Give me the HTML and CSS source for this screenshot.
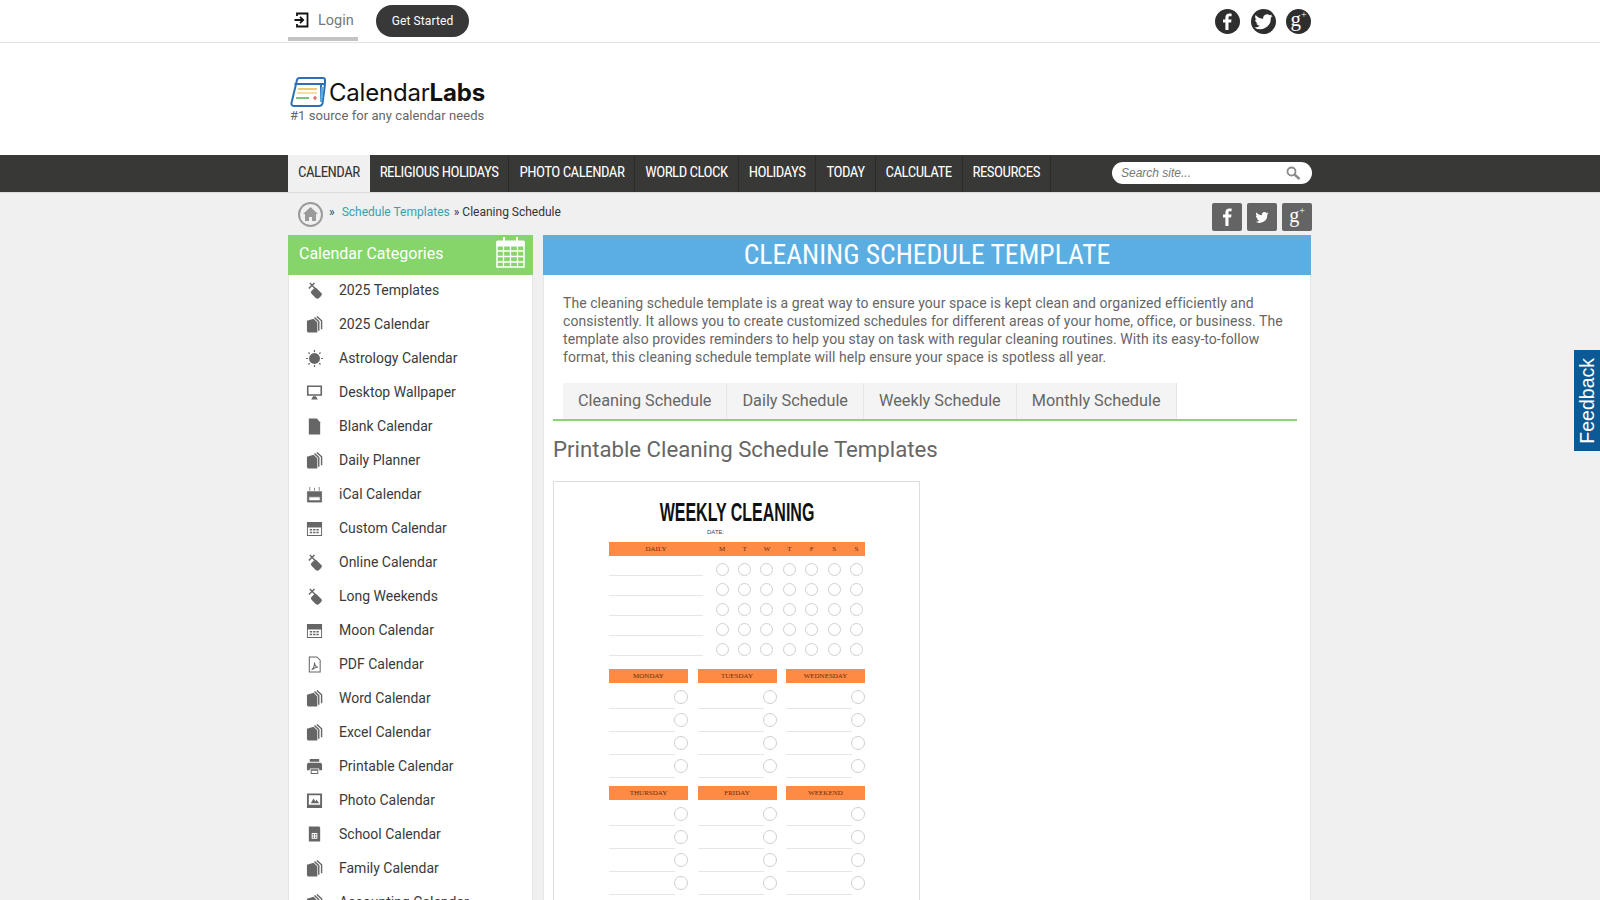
FILE: index.html
```html
<!DOCTYPE html>
<html lang="en">
  <head>
    <meta charset="UTF-8" />
    <title>Cleaning Schedule Template</title>
    <link rel="stylesheet" href="styles.css">
  </head>
  <body>
    <svg class="sprites" width="0" height="0">
      <symbol id="i-pair" viewBox="0 0 18 18"><rect x="7" y="6.500" width="8" height="11" rx="2.500" transform="rotate(-45 11 12)"/><path d="M4 1l5.500 5.500M9 1L3 7" fill="none" stroke="#666" stroke-width="1.500"/></symbol>
      <symbol id="i-docs" viewBox="0 0 18 18"><path d="M1 5L8 3l4 4v10.500H3c-1.200 0-2-.8-2-2z"/><path d="M9 1.500l4.500 4.500v9.500M11.500 .5l5 4.500v9" fill="none" stroke="#666" stroke-width="1.500"/></symbol>
      <symbol id="i-sun" viewBox="0 0 18 18"><circle cx="9" cy="9" r="5.800"/><path d="M9 0v2M9 16v2M0 9h2M16 9h2M2.600 2.600L4 4M14 14l1.400 1.400M2.600 15.400L4 14M14 4l1.400-1.400" stroke="#666" stroke-width="1.300"/></symbol>
      <symbol id="i-screen" viewBox="0 0 18 18"><path d="M1 1.500h16v11H1zm1.700 1.700v7.600h12.600V3.200zM5.500 16.500l2-3.500h3l2 3.500z" fill-rule="evenodd"/></symbol>
      <symbol id="i-page" viewBox="0 0 18 18"><path d="M3 .5h8.500l3.500 4V17.500H3z"/></symbol>
      <symbol id="i-ical" viewBox="0 0 18 18"><path d="M1.500 6h15v11h-15zm1.500 5.500v4h12v-4zM4 1v4M9 2v3M14 1v4" fill-rule="evenodd" stroke="#666" stroke-width=".8"/></symbol>
      <symbol id="i-cal" viewBox="0 0 18 18"><path d="M1 2h16v15H1zm1 6v8h14V8zM4 9.500h2.500V11H4zm3.500 0H10V11H7.500zm3.500 0h2.500V11H11zM4 12.500h2.500V14H4zm3.500 0H10V14H7.500zm3.500 0h2.500V14H11z" fill-rule="evenodd"/></symbol>
      <symbol id="i-pdf" viewBox="0 0 18 18"><path d="M3.500 1h8l3.500 3.500v12.500h-11.500zM6 14.500c2-1 3-4.500 3-7.500 0 3 1.500 4.500 3.500 5-2 0-4 1-6.500 2.500" fill="none" stroke="#666" stroke-width="1.100"/></symbol>
      <symbol id="i-print" viewBox="0 0 18 18"><path d="M4 1h10v3H4zM3 5h12c1 0 2 1 2 2v6h-3v-2H4v2H1V7c0-1 1-2 2-2zM5 12h8v5H5zm1 1.500V16h6v-2.500z" fill-rule="evenodd"/></symbol>
      <symbol id="i-photo" viewBox="0 0 18 18"><path d="M1 1.500h16v15.500H1zm2 2v10h12v-10zM5 12l3-5 2 3 1-2 3 4z" fill-rule="evenodd"/></symbol>
      <symbol id="i-school" viewBox="0 0 18 18"><path d="M3 .5h11l1 1v15H3zm3 7v6h6v-6zm1 1h1.500V10H7zm2.500 0H11V10H9.500zM7 11h1.500v1.500H7zm2.500 0H11v1.500H9.500z" fill-rule="evenodd"/></symbol>
    </svg>

    <div class="topbar">
      <div class="wrap topbar-in">
        <a class="login">
          <svg width="18" height="18" viewBox="0 0 18 18" fill="none" stroke="#111" stroke-width="1.800"><path d="M4 5V2.500h10.500v13H4V13M1.500 9h8M7 5.800L10.200 9 7 12.200"/></svg>
          Login
        </a>
        <a class="get-started">Get Started</a>
        <div class="social">
          <span class="circle"><svg width="25" height="25" viewBox="0 0 25 25"><path fill="#fff" d="M13.500 21v-7.500h2.600l.4-3h-3V8.700c0-.9.300-1.400 1.500-1.400h1.600V4.600c-.3 0-1.200-.1-2.300-.1-2.300 0-3.900 1.400-3.900 4v2H8v3h2.400V21z"/></svg></span>
          <span class="circle"><svg width="25" height="25" viewBox="1.500 1.500 22 22"><path fill="#fff" d="M20.500 7.600c-.6.300-1.200.4-1.900.5.700-.4 1.200-1 1.400-1.800-.6.400-1.300.7-2.100.8a3.300 3.300 0 0 0-5.600 3c-2.700-.1-5.100-1.400-6.700-3.400-.9 1.500-.4 3.400 1 4.400-.5 0-1-.2-1.500-.4 0 1.600 1.100 3 2.600 3.300-.5.100-1 .1-1.500 0 .4 1.300 1.600 2.200 3.100 2.300A6.700 6.700 0 0 1 4.400 17.700a9.400 9.400 0 0 0 14.500-8.400c.6-.4 1.200-1 1.600-1.700z"/></svg></span>
          <span class="circle gplus">g<sup>+</sup></span>
        </div>
      </div>
    </div>

    <div class="brand">
      <div class="wrap">
        <div class="logo">
          <svg width="36" height="30" viewBox="0 0 36 30" fill="none">
            <path d="M6 7l1-4c.3-1.200 1-2 2.500-2H33c1 0 2 .8 2 2v4" stroke="#2f6fb3" stroke-width="2"/>
            <path d="M6 7h29M4.500 7h25c1 0 1.500.8 1.500 2v15" stroke="#2f6fb3" stroke-width="2"/>
            <path d="M6 7L1.500 26c-.3 1.500.5 3 2 3H29c1.500 0 3-1 3.500-2.500L35 7" stroke="#2f6fb3" stroke-width="2"/>
            <path d="M31 10h3l-2 15h-2z" fill="#5baee2"/>
            <path d="M8 12h19" stroke="#e9b949" stroke-width="1.500"/>
            <path d="M7 16h20" stroke="#f0d68a" stroke-width="1.500"/>
            <path d="M6 21h13" stroke="#4caf50" stroke-width="1.500"/>
            <path d="M23 21h4M25 19v4" stroke="#d9534f" stroke-width="1.200"/>
          </svg>
          <span class="logo-text">Calendar<b>Labs</b></span>
        </div>
        <div class="tagline">#1 source for any calendar needs</div>
      </div>
    </div>

    <div class="navbar">
      <div class="wrap nav-in">
        <ul class="nav">
          <li class="active">CALENDAR</li>
          <li>RELIGIOUS HOLIDAYS</li>
          <li>PHOTO CALENDAR</li>
          <li>WORLD CLOCK</li>
          <li>HOLIDAYS</li>
          <li>TODAY</li>
          <li>CALCULATE</li>
          <li>RESOURCES</li>
        </ul>
        <div class="search">
          <span>Search site...</span>
          <svg width="16" height="16" viewBox="0 0 16 16" fill="none" stroke="#8a8a8a"><circle cx="6.500" cy="6.500" r="4" stroke-width="1.800"/><path d="M9.500 9.500l5 4.500" stroke-width="2.400"/></svg>
        </div>
      </div>
    </div>

    <div class="wrap crumbs-row">
      <div class="crumbs">
        <span class="home"><svg width="17" height="17" viewBox="0 0 17 17"><path fill="#9a9a9a" d="M8.500 1L1 8h2v7h4v-4h3v4h4V8h2z"/></svg></span>
        <span class="sep">»</span>
        <a class="crumb-link">Schedule Templates</a>
        <span class="crumb-rest">» Cleaning Schedule</span>
      </div>
      <div class="share">
        <span class="square"><svg width="30" height="28" viewBox="0 0 30 28"><path fill="#fff" d="M16.500 23v-8.500h2.600l.4-3h-3V9.700c0-.9.300-1.400 1.500-1.400h1.600V5.600c-.3 0-1.200-.1-2.300-.1-2.300 0-3.900 1.400-3.900 4v2h-2.400v3h2.400V23z"/></svg></span>
        <span class="square"><svg width="30" height="28" viewBox="-3 -3 36 34"><path fill="#fff" d="M23 9.500c-.6.300-1.200.4-1.900.5.700-.4 1.200-1 1.400-1.800-.6.400-1.300.7-2.100.8a3.300 3.300 0 0 0-5.600 3c-2.700-.1-5.100-1.400-6.700-3.400-.9 1.500-.4 3.400 1 4.400-.5 0-1-.2-1.500-.4 0 1.600 1.100 3 2.600 3.300-.5.100-1 .1-1.500 0 .4 1.300 1.600 2.200 3.100 2.300a6.700 6.700 0 0 1-4.900 1.400 9.400 9.400 0 0 0 14.500-8.400c.6-.4 1.200-1 1.600-1.700z"/></svg></span>
        <span class="square gplus">g<sup>+</sup></span>
      </div>
    </div>

    <div class="wrap columns">
      <aside class="sidebar">
        <div class="side-head">
          <span>Calendar Categories</span>
          <svg width="29" height="32" viewBox="0 0 29 32" fill="none" stroke="#fff"><path d="M1 6h27v25H1z" stroke-width="1.500"/><path d="M1 5h27v5H1z" fill="#fff"/><path d="M8 1v6M21 1v6" stroke-width="2"/><path d="M1 15h27M1 20.500h27M1 26h27M7.500 10v21M14.500 10v21M21.500 10v21" stroke-width="1.300"/></svg>
        </div>
        <ul class="cats">
          <li><svg><use href="#i-pair"/></svg>2025 Templates</li>
          <li><svg><use href="#i-docs"/></svg>2025 Calendar</li>
          <li><svg><use href="#i-sun"/></svg>Astrology Calendar</li>
          <li><svg><use href="#i-screen"/></svg>Desktop Wallpaper</li>
          <li><svg><use href="#i-page"/></svg>Blank Calendar</li>
          <li><svg><use href="#i-docs"/></svg>Daily Planner</li>
          <li><svg><use href="#i-ical"/></svg>iCal Calendar</li>
          <li><svg><use href="#i-cal"/></svg>Custom Calendar</li>
          <li><svg><use href="#i-pair"/></svg>Online Calendar</li>
          <li><svg><use href="#i-pair"/></svg>Long Weekends</li>
          <li><svg><use href="#i-cal"/></svg>Moon Calendar</li>
          <li><svg><use href="#i-pdf"/></svg>PDF Calendar</li>
          <li><svg><use href="#i-docs"/></svg>Word Calendar</li>
          <li><svg><use href="#i-docs"/></svg>Excel Calendar</li>
          <li><svg><use href="#i-print"/></svg>Printable Calendar</li>
          <li><svg><use href="#i-photo"/></svg>Photo Calendar</li>
          <li><svg><use href="#i-school"/></svg>School Calendar</li>
          <li><svg><use href="#i-docs"/></svg>Family Calendar</li>
          <li><svg><use href="#i-docs"/></svg>Accounting Calendar</li>
        </ul>
      </aside>

      <main class="content">
        <h1>CLEANING SCHEDULE TEMPLATE</h1>
        <div class="body">
          <p class="intro">The cleaning schedule template is a great way to ensure your space is kept clean and organized efficiently and consistently. It allows you to create customized schedules for different areas of your home, office, or business. The template also provides reminders to help you stay on task with regular cleaning routines. With its easy-to-follow format, this cleaning schedule template will help ensure your space is spotless all year.</p>
          <div class="tabs">
            <a>Cleaning Schedule</a>
            <a>Daily Schedule</a>
            <a>Weekly Schedule</a>
            <a>Monthly Schedule</a>
          </div>
          <h2>Printable Cleaning Schedule Templates</h2>
          <div class="thumb">
            <div class="sheet">
              <div class="sheet-title">WEEKLY CLEANING</div>
              <div class="sheet-date">DATE:</div>
              <div class="daily-head">
                <span class="daily-label">DAILY</span>
                <span class="days"><i>M</i><i>T</i><i>W</i><i>T</i><i>F</i><i>S</i><i>S</i></span>
              </div>
              <div class="daily-row"><span class="rule"></span><span class="days"><i></i><i></i><i></i><i></i><i></i><i></i><i></i></span></div>
              <div class="daily-row"><span class="rule"></span><span class="days"><i></i><i></i><i></i><i></i><i></i><i></i><i></i></span></div>
              <div class="daily-row"><span class="rule"></span><span class="days"><i></i><i></i><i></i><i></i><i></i><i></i><i></i></span></div>
              <div class="daily-row"><span class="rule"></span><span class="days"><i></i><i></i><i></i><i></i><i></i><i></i><i></i></span></div>
              <div class="daily-row"><span class="rule"></span><span class="days"><i></i><i></i><i></i><i></i><i></i><i></i><i></i></span></div>

              <div class="week-grid">
                <div class="week-col"><b>MONDAY</b><div class="task"></div><div class="task"></div><div class="task"></div><div class="task"></div></div>
                <div class="week-col"><b>TUESDAY</b><div class="task"></div><div class="task"></div><div class="task"></div><div class="task"></div></div>
                <div class="week-col"><b>WEDNESDAY</b><div class="task"></div><div class="task"></div><div class="task"></div><div class="task"></div></div>
                <div class="week-col"><b>THURSDAY</b><div class="task"></div><div class="task"></div><div class="task"></div><div class="task"></div></div>
                <div class="week-col"><b>FRIDAY</b><div class="task"></div><div class="task"></div><div class="task"></div><div class="task"></div></div>
                <div class="week-col"><b>WEEKEND</b><div class="task"></div><div class="task"></div><div class="task"></div><div class="task"></div></div>
              </div>
            </div>
          </div>
        </div>
      </main>
    </div>

    <div class="feedback"><span>Feedback</span></div>
  </body>
</html>
```
FILE: styles.css
```css
html,
body {
  height: 100vh;
  overflow: hidden;
}

body {
  margin: 0;
  background: #f0f0f0;
  font-family: Roboto, "Liberation Sans", sans-serif;
  color: #333;
}

.sprites {
  position: absolute;
}

ul {
  list-style: none;
  margin: 0;
  padding: 0;
}

.wrap {
  width: 1024px;
  margin-left: 288px;
}

/* top bar */
.topbar {
  background: #fff;
  border-bottom: 1px solid #e2e2e2;
  height: 42px;
}

.topbar-in {
  display: flex;
  align-items: flex-start;
  height: 42px;
}

.login {
  display: flex;
  align-items: center;
  gap: 7px;
  width: 70px;
  height: 41px;
  padding: 3px 0 0 5px;
  box-sizing: border-box;
  border-bottom: 4px solid #c4c4c4;
  font-size: 14.500px;
  color: #777;
}

.get-started {
  margin: 5px 0 0 18px;
  width: 93px;
  height: 32px;
  line-height: 32px;
  border-radius: 16px;
  background: #383838;
  color: #fff;
  font-size: 12px;
  letter-spacing: 0.1px;
  text-align: center;
}

.social {
  margin-left: auto;
  margin-top: 9px;
  display: flex;
  gap: 10.500px;
  padding-right: 1px;
}

.circle {
  width: 25px;
  height: 25px;
  border-radius: 50%;
  background: #2e2e2e;
  display: block;
}

.gplus {
  color: #fff;
  font-family: "Liberation Serif", serif;
  font-size: 21px;
  line-height: 21px;
  text-align: center;
}

.gplus sup {
  font-size: 10px;
  line-height: 0;
  vertical-align: 8px;
}

/* logo */
.brand {
  height: 112px;
  box-sizing: border-box;
  padding-top: 34px;
  background: #fff;
}

.logo {
  display: flex;
  align-items: center;
  gap: 3px;
  height: 30px;
  margin-left: 2px;
}

.logo-text {
  font-family: Inter, sans-serif;
  font-size: 24px;
  color: #111;
  letter-spacing: -0.2px;
}

.logo-text b {
  font-weight: 700;
}

.tagline {
  font-size: 13px;
  color: #666;
  margin-top: 1px;
  margin-left: 2px;
  letter-spacing: 0.06px;
}

/* nav */
.navbar {
  background: #383836;
  height: 37px;
  box-shadow: 0 1px 1px #ddd;
}

.nav-in {
  display: flex;
  justify-content: space-between;
}

.nav {
  display: flex;
}

.nav li {
  height: 37px;
  line-height: 35px;
  padding: 0 10px;
  color: #fff;
  font-size: 15px;
  letter-spacing: -0.55px;
  font-stretch: condensed;
  font-family: "Roboto Condensed", "Liberation Sans Narrow", Roboto, sans-serif;
  border-right: 1px solid #2c2c2a;
}

.nav li.active {
  background: #f0f0f0;
  color: #333;
  border-right: 0;
}

.search {
  margin-top: 7px;
  width: 200px;
  height: 22px;
  box-sizing: border-box;
  padding: 0 11px 0 9px;
  border-radius: 11px;
  background: #fff;
  display: flex;
  justify-content: space-between;
  align-items: center;
  font-family: "Liberation Sans", sans-serif;
  font-style: italic;
  font-size: 12px;
  color: #777;
}

/* breadcrumb */
.crumbs-row {
  display: flex;
  justify-content: space-between;
  height: 42px;
  box-sizing: border-box;
  padding-top: 11px;
}

.crumbs {
  display: flex;
  align-items: flex-start;
  font-size: 12px;
  line-height: 18px;
  padding-left: 10px;
}

.home {
  width: 21px;
  height: 21px;
  margin-top: -1px;
  border: 2px solid #9a9a9a;
  border-radius: 50%;
  display: flex;
  align-items: center;
  justify-content: center;
}

.sep {
  margin: 0 7px 0 6px;
  color: #444;
}

.crumb-link {
  color: #3a9fae;
  margin-right: 4px;
  letter-spacing: 0.01px;
}

.crumb-rest {
  color: #333;
}

.share {
  display: flex;
  gap: 5px;
}

.square {
  width: 30px;
  height: 28px;
  border-radius: 2px;
  background: #646464;
  display: block;
}

.square.gplus {
  font-size: 20px;
  line-height: 24px;
}

/* columns */
.columns {
  display: flex;
  align-items: flex-start;
  gap: 10px;
}

.sidebar {
  width: 245px;
  flex: none;
  background: #fff;
  border: 1px solid #e6e6e6;
  border-top: 0;
  box-sizing: border-box;
  margin-top: 1px;
}

.side-head {
  height: 40px;
  box-sizing: border-box;
  margin: 0 -1px;
  padding: 0 8px 4px 11px;
  background: #85d56b;
  color: #fff;
  font-size: 16px;
  display: flex;
  align-items: center;
  justify-content: space-between;
}

.side-head svg {
  margin-top: -2px;
}

.cats {
  margin-top: -2px;
}

.cats li {
  height: 34px;
  display: flex;
  align-items: center;
  font-size: 14px;
  color: #3a3a3a;
}

.cats svg {
  width: 17px;
  height: 17px;
  margin: 0 16px 0 17px;
  fill: #666;
  flex: none;
}

.content {
  width: 768px;
  flex: none;
  background: #fff;
  border: 1px solid #e6e6e6;
  border-top: 0;
  box-sizing: border-box;
  margin-top: 1px;
}

h1 {
  margin: 0 -1px;
  height: 40px;
  line-height: 39px;
  background: #5baee2;
  color: #fff;
  font-size: 27.600px;
  font-weight: 400;
  font-stretch: condensed;
  font-family: "Roboto Condensed", "Liberation Sans Narrow", Roboto, sans-serif;
  text-align: center;
}

.body {
  padding: 19px 13px 0 9px;
}

.intro {
  margin: 0 0 17px 10px;
  font-size: 14px;
  letter-spacing: 0.065px;
  line-height: 18px;
  color: #666;
}

.tabs {
  display: flex;
  padding-left: 10px;
  border-bottom: 2px solid #8bd474;
}

.tabs a {
  height: 36px;
  line-height: 36px;
  padding: 0 15px;
  background: #f4f4f4;
  border-right: 1px solid #e6e6e6;
  font-size: 16.250px;
  color: #666;
}

h2 {
  margin: 15px 0 19px;
  font-size: 22.200px;
  line-height: 26px;
  font-weight: 400;
  color: #666;
}

.thumb {
  width: 367px;
  height: 480px;
  border: 1px solid #dedede;
  box-sizing: border-box;
  background: #fff;
}

/* the printable sheet drawn inside the thumbnail */
.sheet {
  padding: 18px 54px 0 55px;
}

.sheet-title {
  font-family: "Liberation Sans", sans-serif;
  font-weight: 700;
  font-size: 25px;
  line-height: 25px;
  color: #111;
  text-align: center;
  transform: scaleX(0.64);
}

.sheet-date {
  font-family: "Liberation Sans", sans-serif;
  font-size: 6px;
  line-height: 10px;
  margin: 2px 0 5px 98px;
  color: #444;
}

.daily-head {
  height: 14px;
  background: #fd8b45;
  display: flex;
  align-items: center;
  font-family: "Liberation Serif", serif;
  font-size: 7px;
  color: #6a2c08;
}

.daily-label {
  width: 94px;
  text-align: center;
}

.days {
  margin-left: auto;
  display: flex;
  gap: 9.400px;
  padding-right: 2px;
}

.days i {
  display: block;
  width: 13px;
  height: 13px;
  box-sizing: border-box;
  border: 1px solid #cfcfcf;
  border-radius: 50%;
}

.daily-head .days i {
  border: 0;
  font-style: normal;
  text-align: center;
  line-height: 13px;
}

.daily-row {
  height: 20px;
  display: flex;
  align-items: flex-end;
}

.daily-row .days {
  align-items: center;
}

.rule {
  width: 94px;
  border-bottom: 1px solid #e6e6e6;
}

.week-grid {
  display: grid;
  grid-template-columns: repeat(3, 79px);
  justify-content: space-between;
  row-gap: 8px;
  margin-top: 13px;
}

.week-col b {
  display: block;
  height: 14px;
  line-height: 14px;
  background: #fd8b45;
  font-family: "Liberation Serif", serif;
  font-size: 7px;
  font-weight: 400;
  color: #6a2c08;
  text-align: center;
  margin-bottom: 3px;
}

.task {
  height: 23px;
  margin-right: 13px;
  border-bottom: 1px solid #e6e6e6;
  box-sizing: border-box;
  position: relative;
}

.task::after {
  content: "";
  position: absolute;
  right: -13px;
  top: 4px;
  width: 14px;
  height: 14px;
  box-sizing: border-box;
  border: 1px solid #cfcfcf;
  border-radius: 50%;
}

/* side tab */
.feedback {
  position: fixed;
  right: 0;
  top: 350px;
  width: 26px;
  height: 101px;
  background: #0b5a96;
  display: flex;
  align-items: center;
  justify-content: center;
}

.feedback span {
  writing-mode: vertical-rl;
  transform: rotate(180deg);
  font-family: "Liberation Sans", sans-serif;
  font-size: 19.500px;
  color: #fff;
}
```
